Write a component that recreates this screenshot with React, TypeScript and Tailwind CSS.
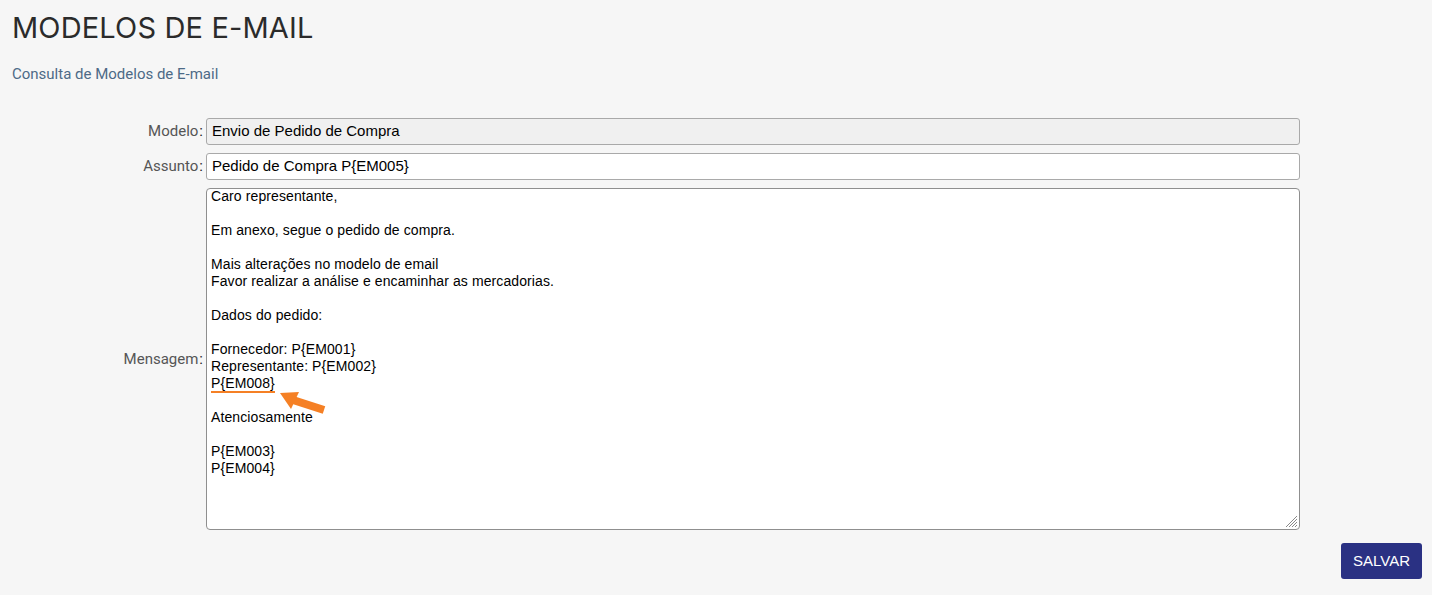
import React from "react";

const lines: string[] = [
  "Caro representante,",
  "",
  "Em anexo, segue o pedido de compra.",
  "",
  "Mais alterações no modelo de email",
  "Favor realizar a análise e encaminhar as mercadorias.",
  "",
  "Dados do pedido:",
  "",
  "Fornecedor: P{EM001}",
  "Representante: P{EM002}",
  "__EM008__",
  "",
  "Atenciosamente",
  "",
  "P{EM003}",
  "P{EM004}",
];

function Label({ text }: { text: string }) {
  return (
    <div className="w-[206px] shrink-0 pr-[3px] text-right text-[15px] text-[#555] font-['Roboto',sans-serif]">
      {text}
      <span className="ml-[1px] text-[#222]">:</span>
    </div>
  );
}

export default function App() {
  return (
    <div className="min-h-[595px] w-full bg-[#f6f6f6] font-['Liberation_Sans',Arial,sans-serif]">
      <div className="pl-[12px] pt-[10px]">
        <h1 className="text-[29px] leading-[36px] text-[#2b2b2b] font-['Inter',sans-serif] font-normal tracking-[0.15px]">
          MODELOS DE E-MAIL
        </h1>
        <p className="mt-[18px] text-[15px] leading-[20px] text-[#4d6a87] font-['Roboto',sans-serif]">
          Consulta de Modelos de E-mail
        </p>
      </div>

      <div className="mt-[34px] flex flex-col gap-[8px] pr-[132px]">
        <div className="flex items-center">
          <Label text="Modelo" />
          <div className="flex h-[27px] flex-1 items-center rounded-[3px] border border-[#a9a9a9] bg-[#f0f0f0] px-[5px] text-[15px] text-black">
            Envio de Pedido de Compra
          </div>
        </div>
        <div className="flex items-center">
          <Label text="Assunto" />
          <div className="flex h-[27px] flex-1 items-center rounded-[3px] border border-[#a9a9a9] bg-white px-[5px] text-[15px] text-black">
            Pedido de Compra P{"{"}EM005{"}"}
          </div>
        </div>
        <div className="flex items-center">
          <Label text="Mensagem" />
          <div className="relative h-[342px] flex-1 rounded-[4px] border border-[#8f8f8f] bg-white pl-[4px] text-[14px] leading-[17px] tracking-[0.1px] text-black">
            <div className="-mt-[1px]">
              {lines.map((l, i) =>
                l === "__EM008__" ? (
                  <div key={i} className="h-[17px]">
                    <span className="inline-block border-b-2 border-[#f58025] leading-[16px]">P{"{"}EM008{"}"}</span>
                  </div>
                ) : (
                  <div key={i} className="h-[17px] whitespace-pre">
                    {l}
                  </div>
                )
              )}
            </div>
            <svg
              className="absolute left-[72px] top-[202px]"
              width="50"
              height="24"
              viewBox="0 0 50 24"
            >
              <line x1="45" y1="19" x2="14" y2="9" stroke="#f58025" strokeWidth="8" strokeLinecap="butt" />
              <polygon points="1,2 20,1 12,18" fill="#f58025" />
            </svg>
            <svg className="absolute bottom-[1px] right-[1px]" width="14" height="14" viewBox="0 0 14 14">
              <line x1="13" y1="2" x2="2" y2="13" stroke="#8a8a8a" strokeWidth="1" />
              <line x1="13" y1="5" x2="5" y2="13" stroke="#8a8a8a" strokeWidth="1" />
              <line x1="13" y1="8" x2="8" y2="13" stroke="#8a8a8a" strokeWidth="1" />
              <line x1="13" y1="11" x2="11" y2="13" stroke="#8a8a8a" strokeWidth="1" />
            </svg>
          </div>
        </div>
      </div>

      <div className="mt-[13px] flex justify-end pr-[10px]">
        <button className="h-[36px] rounded-[3px] bg-[#2a3183] px-[12px] text-[15px] text-white font-['Liberation_Sans',Arial,sans-serif]">
          SALVAR
        </button>
      </div>
    </div>
  );
}
